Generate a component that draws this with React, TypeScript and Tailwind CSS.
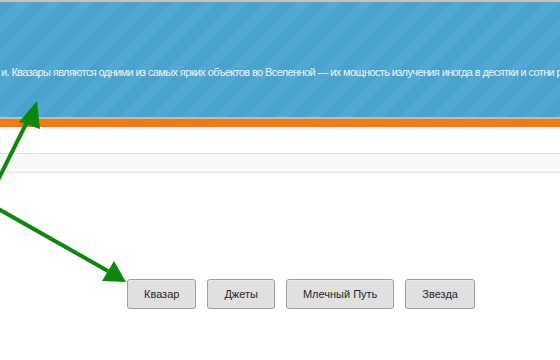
const buttons = ["Квазар", "Джеты", "Млечный Путь", "Звезда"];

function Arrows() {
  return (
    <svg
      className="pointer-events-none absolute left-0 top-0"
      width="560"
      height="360"
      viewBox="0 0 560 360"
    >
      <g fill="#0b870b" stroke="#0b870b">
        <line x1="-14" y1="204" x2="28" y2="120" strokeWidth="4" />
        <polygon points="37,101 19,122 40,129" stroke="none" />
        <line x1="-14" y1="202" x2="108" y2="271" strokeWidth="4" />
        <polygon points="126,282 102,281 114,261" stroke="none" />
      </g>
    </svg>
  );
}

export default function App() {
  return (
    <div className="relative h-[360px] w-[560px] overflow-hidden bg-white font-['Liberation_Sans',Arial,sans-serif]">
      <div className="border-t-2 border-[#c3c3c3]">
        <div className="flex h-[115px] items-center overflow-hidden bg-[#4ba4cf] bg-[image:repeating-linear-gradient(135deg,#4aa3ce_0px,#4aa3ce_12px,#51a8d2_12px,#51a8d2_22px)] pt-[26px]">
          <div className="ml-[1px] whitespace-nowrap text-[11px] tracking-[-0.62px] text-[#eef5f9]">
            и. Квазары являются одними из самых ярких объектов во Вселенной — их мощность излучения иногда в десятки и сотни р
          </div>
        </div>
        <div className="h-[2px] bg-[#8ecae6]" />
        <div className="h-[8px] bg-[#ff7800]" />
        <div className="h-[3px] bg-[#f4f4f4]" />
        <div className="h-[23px]" />
        <div className="h-[20px] border-y border-[#e2e2e2] bg-[#f8f8f8]" />
      </div>

      <div className="mt-[106px] flex gap-[11px] pl-[127px]">
        {buttons.map((b) => (
          <button
            key={b}
            type="button"
            className="h-[30px] rounded-[3px] border border-[#9e9e9e] bg-[#e0e0e0] px-[16px] text-[11px] text-[#262626] shadow-[inset_0_1px_0_#ececec]"
          >
            {b}
          </button>
        ))}
      </div>

      <Arrows />
    </div>
  );
}
